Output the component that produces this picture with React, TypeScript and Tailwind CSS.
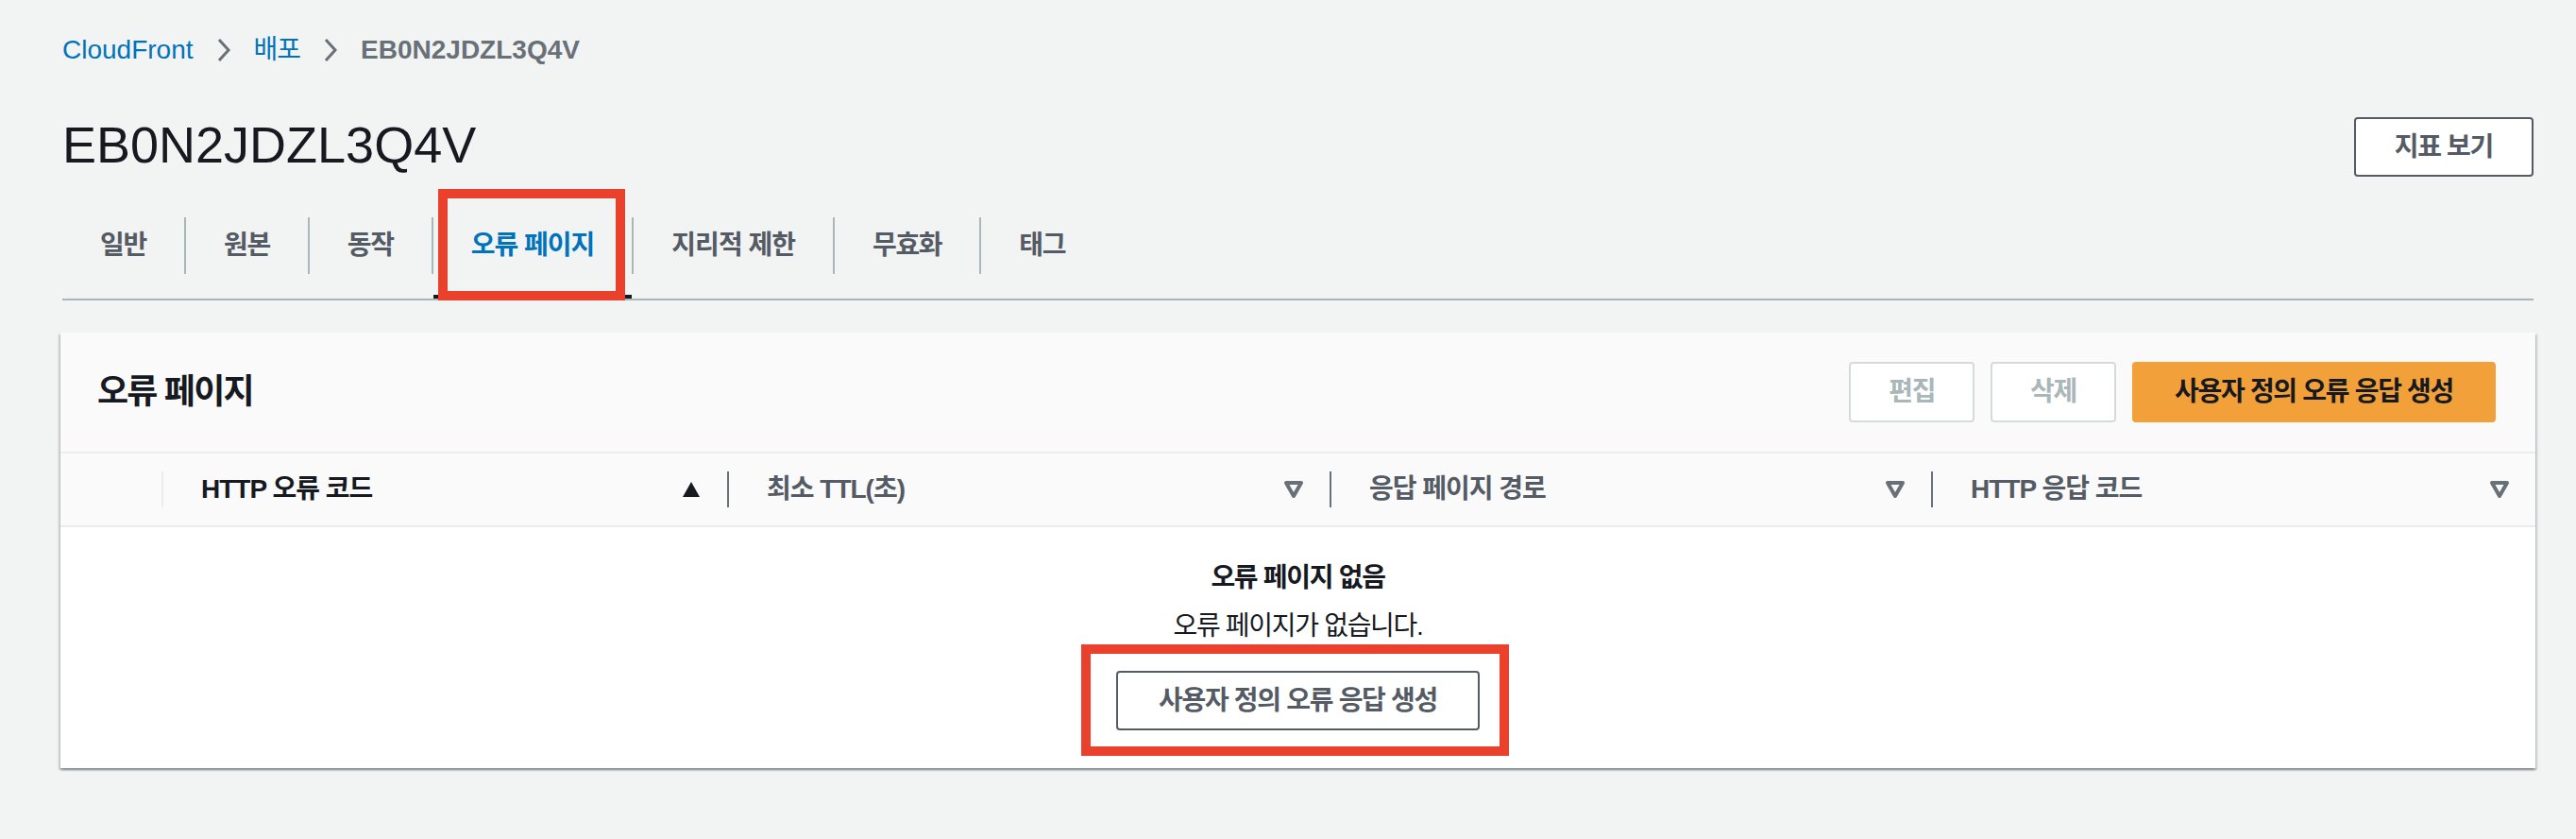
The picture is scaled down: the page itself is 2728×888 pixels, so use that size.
import React from 'react';

const tabs = ['일반', '원본', '동작', '오류 페이지', '지리적 제한', '무효화', '태그'];

function Chevron() {
  return (
    <svg width="20" height="30" viewBox="0 0 20 30" className="shrink-0">
      <polyline points="5,4 15,15 5,26" fill="none" stroke="#687078" strokeWidth="3" />
    </svg>
  );
}

function SortUp() {
  return (
    <svg width="20" height="18" viewBox="0 0 20 18" className="shrink-0">
      <polygon points="10,1 19,17 1,17" fill="#16191f" />
    </svg>
  );
}

function SortDown() {
  return (
    <svg width="22" height="20" viewBox="0 0 22 20" className="shrink-0">
      <polygon points="3,3 19,3 11,17" fill="none" stroke="#687078" strokeWidth="4" strokeLinejoin="round" />
    </svg>
  );
}

function ColHead({ label, sorted, width, faint }: { label: string; sorted?: boolean; width?: string; faint?: boolean }) {
  return (
    <div className={`flex h-full items-center ${width ?? 'flex-1'}`}>
      <div className={`h-[38px] w-[2px] ${faint ? 'bg-[#eaeded]' : 'bg-[#687078]'}`} />
      <span className={`pl-[40px] text-[28px] font-bold tracking-[-1px] ${sorted ? 'text-[#16191f]' : 'text-[#545b64]'}`}>
        {label}
      </span>
      <div className="flex-1" />
      {sorted ? <SortUp /> : <SortDown />}
      <div className={sorted ? 'w-[28px]' : 'w-[27px]'} />
    </div>
  );
}

export default function App() {
  return (
    <div className="min-h-[888px] w-full bg-[#f2f3f3] pl-[66px] pr-[45px] pt-[33px] font-['Liberation_Sans','Noto_Sans_CJK_KR',sans-serif]">
      {/* breadcrumb */}
      <nav className="flex h-[40px] items-center gap-[22px] text-[28px]">
        <span className="text-[#0073bb]">CloudFront</span>
        <Chevron />
        <span className="tracking-[-1px] text-[#0073bb]">배포</span>
        <Chevron />
        <span className="font-bold text-[#687078]">EB0N2JDZL3Q4V</span>
      </nav>

      {/* header */}
      <div className="mt-[48px] flex h-[64px] items-start justify-between">
        <h1 className="text-[54px] font-normal leading-[64px] text-[#16191f]">EB0N2JDZL3Q4V</h1>
        <button className="mt-[3px] h-[63px] rounded-[4px] border-2 border-[#545b64] bg-white px-[41px] text-[28px] font-bold tracking-[-1.3px] text-[#545b64]">
          지표 보기
        </button>
      </div>

      {/* tabs */}
      <div className="mt-[18px] flex h-[115px] items-stretch border-b-2 border-[#aab7b8]">
        {tabs.map((t, i) => {
          const active = t === '오류 페이지';
          return (
            <React.Fragment key={t}>
              {i > 0 && <div className="h-[60px] w-[2px] self-center bg-[#aab7b8]" />}
              <div
                className={`relative flex items-center px-[40px] text-[28px] font-bold ${
                  t.includes(' ') ? 'tracking-[-1px]' : 'tracking-[-1.3px]'
                } ${active ? 'border-b-4 border-[#16191f] text-[#0073bb]' : 'text-[#545b64]'}`}
              >
                <span className={active ? 'pt-[4px]' : ''}>{t}</span>
                {active && (
                  <div className="absolute -bottom-[6px] -top-[3px] left-[5px] right-[7px] border-[10px] border-[#e9412b]" />
                )}
              </div>
            </React.Fragment>
          );
        })}
      </div>

      {/* panel */}
      <section className="-mx-[2px] mt-[34px] bg-white shadow-[0_2px_2px_0_rgba(0,28,36,0.3),2px_2px_2px_0_rgba(0,28,36,0.15),-2px_2px_2px_0_rgba(0,28,36,0.15)]">
        <div className="flex h-[128px] items-center justify-between border-b-2 border-[#eaeded] bg-[#fafafa] pl-[39px] pr-[42px]">
          <h2 className="text-[36px] font-bold tracking-[-1.8px] text-[#16191f]">오류 페이지</h2>
          <div className="flex items-center gap-[17px]">
            <button className="h-[64px] rounded-[4px] border-2 border-[#d5dbdb] bg-white px-[40px] text-[28px] font-bold tracking-[-1.3px] text-[#aab7b8]">
              편집
            </button>
            <button className="h-[64px] rounded-[4px] border-2 border-[#d5dbdb] bg-white px-[40px] text-[28px] font-bold tracking-[-1.3px] text-[#aab7b8]">
              삭제
            </button>
            <button className="h-[64px] rounded-[4px] border-2 border-[#f1a03a] bg-[#f1a03a] px-[43px] text-[28px] font-bold tracking-[-1.3px] text-[#16191f]">
              사용자 정의 오류 응답 생성
            </button>
          </div>
        </div>

        <div className="flex h-[78px] items-center border-b-2 border-[#eaeded] bg-[#fafafa]">
          <div className="w-[107px]" />
          <ColHead label="HTTP 오류 코드" sorted faint width="w-[599px]" />
          <ColHead label="최소 TTL(초)" width="w-[638px]" />
          <ColHead label="응답 페이지 경로" width="w-[637px]" />
          <ColHead label="HTTP 응답 코드" />
        </div>

        <div className="flex flex-col items-center pb-[40px] pt-[34px] text-[28px] tracking-[-1.3px] text-[#16191f]">
          <p className="font-bold leading-[40px]">오류 페이지 없음</p>
          <p className="mt-[11px] leading-[40px]">오류 페이지가 없습니다.</p>
          <div className="relative mt-[27px]">
            <button className="h-[63px] rounded-[4px] border-2 border-[#545b64] bg-white px-[43px] text-[28px] font-bold tracking-[-1.3px] text-[#545b64]">
              사용자 정의 오류 응답 생성
            </button>
            <div className="absolute -bottom-[27px] -left-[37px] -right-[31px] -top-[28px] border-[10px] border-[#e9412b]" />
          </div>
        </div>
      </section>
    </div>
  );
}
